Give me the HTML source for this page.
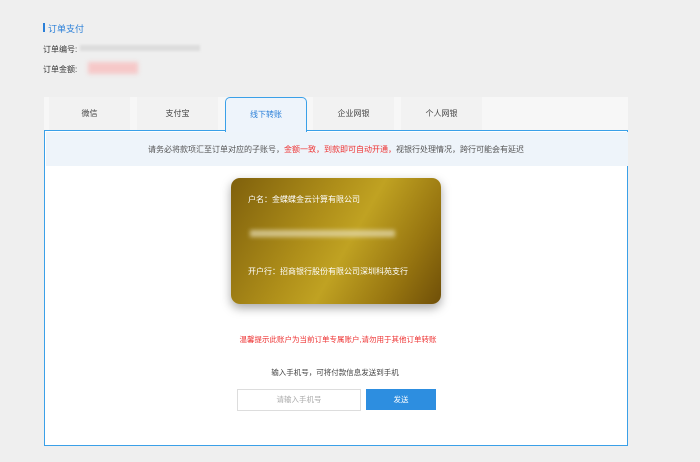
<!DOCTYPE html>
<html><head><meta charset="utf-8"><style>
body{margin:0;width:700px;height:462px;background:#efefef;font-family:"Liberation Sans","Noto Sans CJK SC",sans-serif;position:relative;overflow:hidden;color:#333}
.a{position:absolute;font-size:8px;white-space:nowrap}
.tab{position:absolute;top:97px;width:81px;height:33px;background:#f2f2f2;font-size:8px;text-align:center;line-height:34px;color:#444}
</style></head><body>
<div style="position:absolute;left:43px;top:23px;width:2px;height:9px;background:#2a7fd8"></div>
<div class="a" style="left:48px;top:22px;font-size:9px;color:#2a7fd8">订单支付</div>
<div class="a" style="left:43px;top:44px">订单编号:</div>
<div style="position:absolute;left:80px;top:45px;width:120px;height:6px;background:#ddd;filter:blur(1px)"></div>
<div class="a" style="left:43px;top:64px">订单金额:</div>
<div style="position:absolute;left:88px;top:62px;width:50px;height:12px;background:#f6c8c8;filter:blur(2px)"></div>
<div style="position:absolute;left:44px;top:97px;width:584px;height:33px;background:#f7f7f7"></div>
<div class="tab" style="left:49px">微信</div>
<div class="tab" style="left:137px">支付宝</div>
<div class="tab" style="left:401px">个人网银</div>
<div class="tab" style="left:313px">企业网银</div>
<div style="position:absolute;left:44px;top:130px;width:582px;height:314px;border:1.5px solid #3aa0e8;background:#fff"></div>
<div style="position:absolute;left:225px;top:97px;width:80px;height:35px;border:1.5px solid #3aa0e8;border-bottom:none;border-radius:5px 5px 0 0;background:#eef4fb;font-size:8px;text-align:center;line-height:34px;color:#2a7fd8">线下转账</div>
<div style="position:absolute;left:45.5px;top:131.5px;width:582px;height:34px;background:#eef4fa"></div>
<div class="a" style="left:0;width:672px;text-align:center;top:144px;color:#555">请务必将款项汇至订单对应的子账号，<span style="color:#e33">金额一致，到款即可自动开通，</span>视银行处理情况，跨行可能会有延迟</div>
<div style="position:absolute;left:231px;top:178px;width:210px;height:126px;border-radius:9px;background:linear-gradient(120deg,#7f600c 0%,#b0901a 40%,#c0a222 55%,#977510 80%,#6f4f08 100%);box-shadow:0 4px 10px rgba(0,0,0,.35)"></div>
<div class="a" style="left:248px;top:194px;color:#fff">户名：金蝶蝶金云计算有限公司</div>
<div style="position:absolute;left:250px;top:230px;width:145px;height:7px;background:#e8dfb8;filter:blur(2px);opacity:.7"></div>
<div class="a" style="left:248px;top:266px;color:#fff">开户行：招商银行股份有限公司深圳科苑支行</div>
<div class="a" style="left:0;width:676px;text-align:center;top:334px;color:#e33;font-size:7.5px">温馨提示此账户为当前订单专属账户,请勿用于其他订单转账</div>
<div class="a" style="left:0;width:670px;text-align:center;top:367px;color:#444;font-size:7.5px">输入手机号，可将付款信息发送到手机</div>
<div style="position:absolute;left:237px;top:389px;width:122px;height:20px;border:1px solid #ddd;background:#fff;font-size:7.5px;color:#aaa;text-align:center;line-height:20px">请输入手机号</div>
<div style="position:absolute;left:366px;top:389px;width:70px;height:21px;background:#2d8ee0;color:#fff;font-size:7.5px;text-align:center;line-height:21px">发送</div>
</body></html>
